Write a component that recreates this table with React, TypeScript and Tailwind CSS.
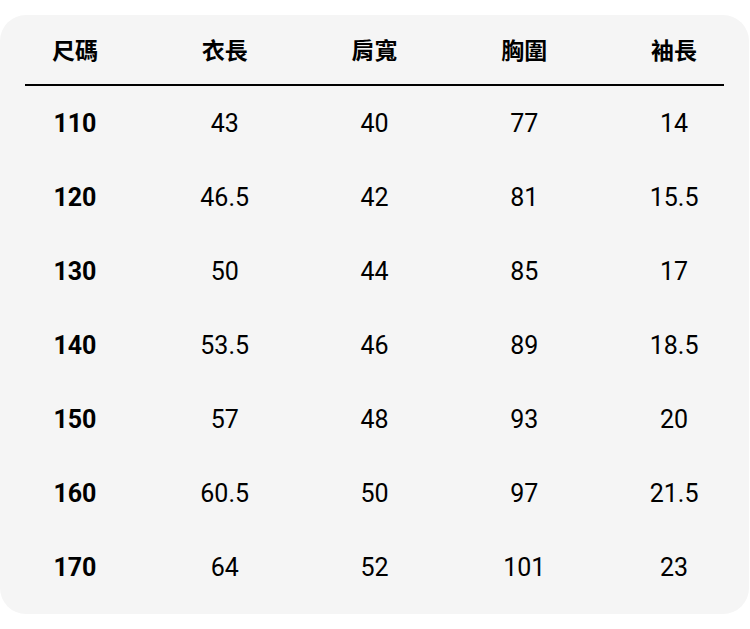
const header = ["尺碼", "衣長", "肩寬", "胸圍", "袖長"];

const rows = [
  ["110", "43", "40", "77", "14"],
  ["120", "46.5", "42", "81", "15.5"],
  ["130", "50", "44", "85", "17"],
  ["140", "53.5", "46", "89", "18.5"],
  ["150", "57", "48", "93", "20"],
  ["160", "60.5", "50", "97", "21.5"],
  ["170", "64", "52", "101", "23"],
];

export default function App() {
  return (
    <div className="h-[629px] w-[750px] bg-white pt-[15px] font-['Roboto','Noto_Sans_CJK_TC',sans-serif] text-black">
      <div className="h-[599px] w-[749px] rounded-[26px] bg-[#f5f5f5]">
        {/* header */}
        <div className="grid h-[69px] grid-cols-5 items-center text-center text-[23px] font-bold">
          {header.map((h) => (
            <span key={h} className="font-['Noto_Sans_CJK_TC',sans-serif]">
              {h}
            </span>
          ))}
        </div>
        <div className="mx-[25px] h-[2px] bg-black" />

        {/* body */}
        <div className="pt-[1px]">
          {rows.map((r) => (
            <div key={r[0]} className="grid h-[74px] grid-cols-5 items-center text-center text-[25px]">
              {r.map((c, i) => (
                <span key={i} className={i === 0 ? "font-bold" : ""}>
                  {c}
                </span>
              ))}
            </div>
          ))}
        </div>
      </div>
    </div>
  );
}
